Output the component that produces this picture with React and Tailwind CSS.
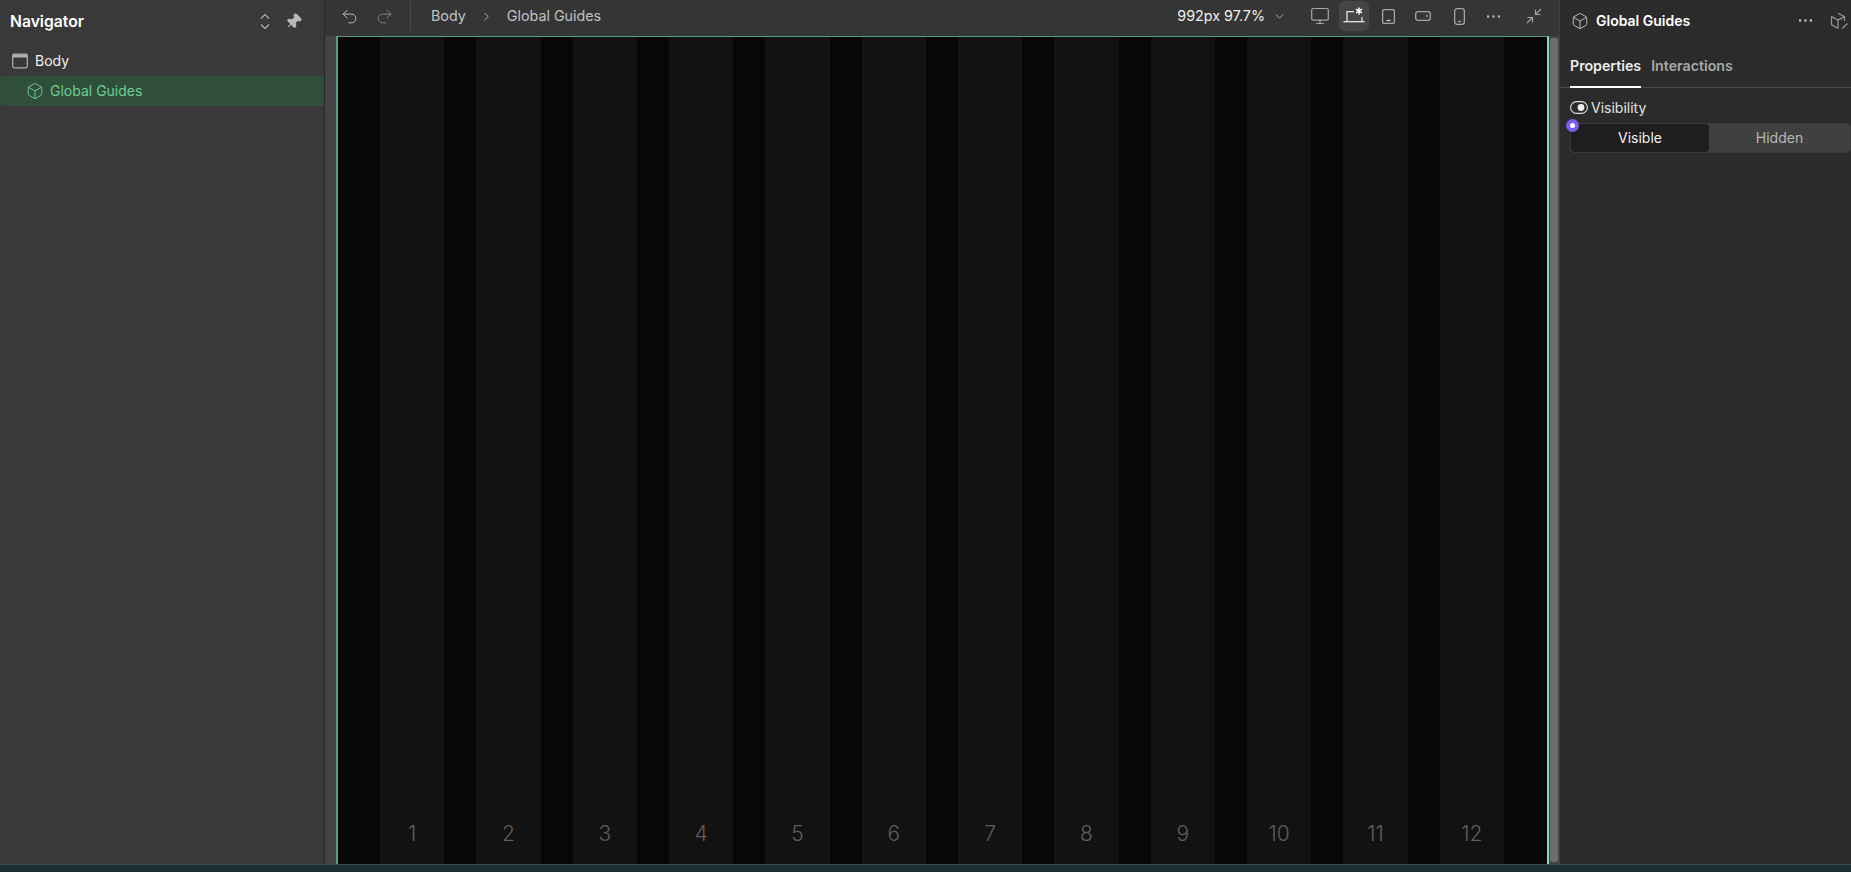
import { Box, ChevronDown, ChevronRight, Minimize2, Monitor, Pin, Redo2, Undo2 } from 'lucide-react';

const columns = [1, 2, 3, 4, 5, 6, 7, 8, 9, 10, 11, 12];

function Dots({ className }) {
  return (
    <svg width="13" height="3" viewBox="0 0 13 3" fill="currentColor" className={className}>
      <rect x="0" y="0.4" width="2.2" height="2.2" />
      <rect x="5.4" y="0.4" width="2.2" height="2.2" />
      <rect x="10.8" y="0.4" width="2.2" height="2.2" />
    </svg>
  );
}

function Navigator() {
  return (
    <aside className="w-[325px] shrink-0 bg-[#393939] border-r border-[#2a2a2a] flex flex-col">
      <div className="h-[43px] pl-[10px] pr-[22px] flex items-center justify-between">
        <span className="text-[15.7px] font-semibold text-white">Navigator</span>
        <div className="flex items-center gap-[13px] text-[#b8b8b8]">
          <svg width="14" height="17" viewBox="0 0 14 17" fill="none" stroke="currentColor" strokeWidth="1.1">
            <path d="M3 5.5L7 1.5L11 5.5" />
            <path d="M3 11.5L7 15.5L11 11.5" />
          </svg>
          <Pin size={17} strokeWidth={1.5} fill="currentColor" className="rotate-45" />
        </div>
      </div>
      <div className="h-[33px] pt-[2px] pl-[12px] flex items-center gap-[7px] text-[14px] text-[#f0f0f0]">
        <svg width="16" height="16" viewBox="0 0 16 16" fill="none" className="text-[#b0b0b0]">
          <rect x="0.7" y="1.2" width="14.6" height="13.6" rx="1.5" stroke="currentColor" strokeWidth="1.2" />
          <rect x="1" y="1.5" width="14" height="3" fill="currentColor" />
        </svg>
        Body
      </div>
      <div className="h-[30px] pb-[1px] pl-[26px] flex items-center gap-[6px] bg-[#2f4f3b] rounded-l-[4px] text-[14px] text-[#6fce94]">
        <Box size={18} strokeWidth={1.25} />
        Global Guides
      </div>
    </aside>
  );
}

function TopBar() {
  return (
    <div className="h-[36px] shrink-0 bg-[#353535] flex items-center pb-[4px] text-[14.3px] text-[#c2c2c2] pl-[15px] pr-[16px]">
      <Undo2 size={19} strokeWidth={1.2} className="text-[#c0c0c0]" />
      <Redo2 size={19} strokeWidth={1.2} className="ml-[16px] text-[#858585]" />
      <div className="w-px h-[30px] bg-[#4c4c4c] ml-[16px] mr-[20px]" />
      <span>Body</span>
      <ChevronRight size={13} strokeWidth={1.6} className="mx-[14px]" />
      <span>Global Guides</span>
      <span className="ml-auto text-[#f0f0f0]">992px 97.7%</span>
      <ChevronDown size={13} strokeWidth={1.6} className="ml-[8px] mr-[24px]" />
      <div className="flex items-center text-[#a6a6a6]">
        <Monitor size={20} strokeWidth={1.45} />
        <div className="ml-[9px] w-[30px] h-[30px] rounded-[5px] bg-[#454545] flex items-center justify-center text-[#e6e6e6]">
          <svg width="22" height="20" viewBox="0 0 22 20" fill="none" stroke="currentColor" strokeWidth="1.3">
            <path d="M4 15V5.7H11" />
            <path d="M19 11V15" />
            <path d="M0.5 15.7H21.5" />
            <path d="M16 1.5V8.5M13 3.2L19 6.8M19 3.2L13 6.8" strokeWidth="1.5" className="text-white" />
          </svg>
        </div>
        <svg width="13" height="15" viewBox="0 0 13 15" fill="none" stroke="currentColor" strokeWidth="1.3" className="ml-[13px]">
          <rect x="0.65" y="0.65" width="11.7" height="13.7" rx="1.2" />
          <path d="M4.5 11.5H8.5" className="text-[#d0d0d0]" />
        </svg>
        <svg width="16" height="10" viewBox="0 0 16 10" fill="none" stroke="currentColor" strokeWidth="1.3" className="ml-[20px]">
          <rect x="0.65" y="0.65" width="14.7" height="8.7" rx="2.4" />
          <path d="M12 3.7V6" />
        </svg>
        <svg width="11" height="17" viewBox="0 0 11 17" fill="none" stroke="currentColor" strokeWidth="1.3" className="ml-[23px]">
          <rect x="0.65" y="0.65" width="9.7" height="15.7" rx="2.4" />
          <path d="M4 13.5H7" />
        </svg>
        <Dots className="ml-[22px] text-[#b8b8b8]" />
        <Minimize2 size={18} strokeWidth={1.5} className="ml-[25px]" />
      </div>
    </div>
  );
}

function Canvas() {
  return (
    <div className="flex-1 min-h-0 flex bg-[#444444] pl-[11px]">
      <div className="flex-1 border-t border-x-2 border-t-[#4fa07c] border-l-[#4fa07c] border-r-[#7fe0bb] bg-[#070707] pl-[42px] pr-[43px] grid grid-cols-12 gap-x-[32px]">
        {columns.map((n) => (
          <div key={n} className="bg-[#121212] flex items-end justify-center pb-[18px]">
            <span className="text-[21px] font-light leading-[24px] text-[#5e5e5e]">{n}</span>
          </div>
        ))}
      </div>
      <div className="w-[10px] py-[2px] pl-[1px]">
        <div className="h-full w-[8px] rounded-[3px] bg-[#6d6d6d]" />
      </div>
    </div>
  );
}

function Settings() {
  return (
    <aside className="w-[292px] shrink-0 bg-[#2b2b2b] border-l border-[#414141] flex flex-col">
      <div className="h-[41px] pl-[11px] flex items-center text-[14px] font-semibold text-white">
        <Box size={18} strokeWidth={1.25} className="text-[#c4c4c4] mr-[7px]" />
        Global Guides
        <Dots className="ml-auto mr-[18px] text-[#c8c8c8]" />
        <svg width="19" height="18" viewBox="0 0 19 18" fill="none" stroke="#969696" strokeWidth="1.2" className="mr-[2px]">
          <path d="M8 1.2L14.5 4.6V9" />
          <path d="M14.5 4.6L8 8L1.5 4.6" />
          <path d="M1.5 4.6V12.6L8 16.4" />
          <path d="M8 8V16" />
          <path d="M12 16.5L17.5 11.5" />
        </svg>
      </div>
      <div className="h-[47px] pl-[10px] flex gap-[10px] border-b border-[#4a4a4a] text-[14.2px] font-semibold">
        <div className="h-[47px] pt-[14px] border-b-2 border-white text-[#eeeeee]">Properties</div>
        <div className="pt-[14px] text-[#a8a8a8]">Interactions</div>
      </div>
      <div className="pl-[10px] pt-[9px]">
        <div className="flex items-center gap-[3px] h-[20px] text-[14px] text-[#e4e4e4]">
          <svg width="18" height="13" viewBox="0 0 18 13" fill="none">
            <rect x="0.6" y="0.6" width="16.8" height="11.8" rx="5.9" stroke="#e0e0e0" strokeWidth="1.1" />
            <circle cx="11" cy="6.5" r="3.4" fill="#f0f0f0" />
          </svg>
          Visibility
        </div>
        <div className="relative mt-[6px] h-[30px] flex rounded-[4px] bg-[#404040] border border-[#3a3a3a] text-[14px]">
          <span className="absolute -left-[5px] -top-[5px] w-[13px] h-[13px] rounded-full bg-[#7a5cf0] flex items-center justify-center">
            <span className="w-[5px] h-[5px] rounded-full bg-white" />
          </span>
          <div className="w-[138px] pb-[1px] rounded-[4px] bg-[#1e1e1e] text-[#f0f0f0] flex items-center justify-center">Visible</div>
          <div className="flex-1 pb-[1px] text-[#b8b8b8] flex items-center justify-center">Hidden</div>
        </div>
      </div>
    </aside>
  );
}

export default function App() {
  return (
    <div className="h-screen w-full flex flex-col overflow-hidden bg-[#393939] font-['Inter',sans-serif]">
      <div className="flex-1 min-h-0 flex">
        <Navigator />
        <main className="flex-1 min-w-0 flex flex-col">
          <TopBar />
          <Canvas />
        </main>
        <Settings />
      </div>
      <div className="h-[8px] shrink-0 bg-[#1b3136] border-t border-[#3d4a4c]" />
    </div>
  );
}
